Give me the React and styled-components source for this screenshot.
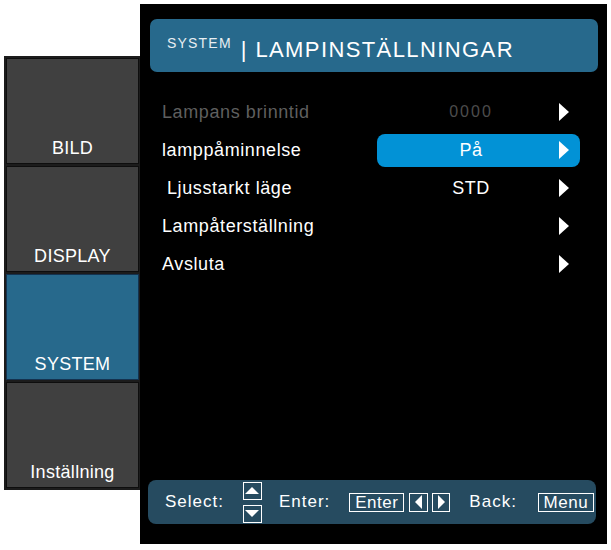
import styled, { createGlobalStyle } from "styled-components";

const GlobalStyle = createGlobalStyle`
  body {
    margin: 0;
    background: #fff;
    font-family: "Liberation Sans", Arial, sans-serif;
  }
`;

const tabs = ["BILD", "DISPLAY", "SYSTEM", "Inställning"];

const rows = [
  { label: "Lampans brinntid", value: "0000", dim: true },
  { label: "lamppåminnelse", value: "På", active: true },
  { label: "Ljusstarkt läge", value: "STD", indent: true },
  { label: "Lampåterställning", value: "" },
  { label: "Avsluta", value: "" },
];

const App = () => {
  return (
    <Screen>
      <GlobalStyle />
      <Sidebar>
        {tabs.map((tab) => (
          <Tab key={tab} selected={tab === "SYSTEM"}>
            {tab}
          </Tab>
        ))}
      </Sidebar>
      <Panel>
        <Header>
          <Crumb>SYSTEM</Crumb>
          <Title>| LAMPINSTÄLLNINGAR</Title>
        </Header>
        <List>
          {rows.map((row) => (
            <Row key={row.label}>
              <Label dim={row.dim} indent={row.indent}>
                {row.label}
              </Label>
              <ValueCell active={row.active}>
                <Value dim={row.dim}>{row.value}</Value>
                <Arrow />
              </ValueCell>
            </Row>
          ))}
        </List>
        <Footer>
          <Hint>Select:</Hint>
          <UpDown>
            <KeyBox wide="19px" tall="18px">
              <Tri dir="up" />
            </KeyBox>
            <KeyBox wide="19px" tall="18px">
              <Tri dir="down" />
            </KeyBox>
          </UpDown>
          <Hint gap="17px">Enter:</Hint>
          <KeyBox gap="19px" wide="55px">Enter</KeyBox>
          <KeyBox gap="5px" wide="19px">
            <Tri dir="left" />
          </KeyBox>
          <KeyBox gap="4px" wide="18px">
            <Tri dir="right" />
          </KeyBox>
          <Hint gap="19px">Back:</Hint>
          <KeyBox gap="21px" wide="56px">Menu</KeyBox>
        </Footer>
      </Panel>
    </Screen>
  );
};

export default App;

const Screen = styled.div`
  display: flex;
  align-items: flex-start;
  padding: 4px 0 0 4px;
`;

const Sidebar = styled.nav`
  margin-top: 52px;
  width: 136px;
  box-sizing: border-box;
  padding: 2px 1px 2px 2px;
  background: #1c1c1c;
  display: flex;
  flex-direction: column;
  gap: 2px;
`;

const Tab = styled.div`
  height: 106px;
  box-sizing: border-box;
  border: 1px solid ${(p) => (p.selected ? "#14324f" : "#0e0e0e")};
  background: ${(p) => (p.selected ? "#27698c" : "#404040")};
  color: #fff;
  font-size: 18px;
  line-height: 20px;
  letter-spacing: 0.3px;
  display: flex;
  align-items: flex-end;
  justify-content: center;
  padding-bottom: 5px;
`;

const Panel = styled.main`
  width: 467px;
  height: 540px;
  box-sizing: border-box;
  background: #000;
  padding: 15px 0 20px 0;
  display: flex;
  flex-direction: column;
`;

const Header = styled.header`
  height: 53px;
  box-sizing: border-box;
  margin: 0 9px 0 10px;
  background: #27698c;
  border-radius: 7px;
  display: flex;
  align-items: flex-start;
  padding: 17px 0 0 17px;
  color: #fff;
`;

const Crumb = styled.span`
  font-size: 14px;
  line-height: 14px;
  letter-spacing: 1.2px;
  color: #e8eef2;
`;

const Title = styled.span`
  margin: 3px 0 0 9px;
  font-size: 22px;
  line-height: 22px;
  letter-spacing: 1.4px;
`;

const List = styled.div`
  margin-top: 21px;
  padding-left: 22px;
  display: flex;
  flex-direction: column;
`;

const Row = styled.div`
  height: 38px;
  display: flex;
  align-items: center;
`;

const Label = styled.div`
  width: 215px;
  box-sizing: border-box;
  padding-left: ${(p) => (p.indent ? "5px" : "0")};
  font-size: 18px;
  letter-spacing: 0.6px;
  color: ${(p) => (p.dim ? "#5f5f5f" : "#fff")};
`;

const ValueCell = styled.div`
  width: 203px;
  height: 33px;
  box-sizing: border-box;
  padding-right: 11px;
  border-radius: 8px;
  background: ${(p) => (p.active ? "#0292d6" : "transparent")};
  display: flex;
  align-items: center;
`;

const Value = styled.div`
  flex: 1;
  padding-left: 6px;
  text-align: center;
  color: ${(p) => (p.dim ? "#4c4c4c" : "#fff")};
  font-size: ${(p) => (p.dim ? "16px" : "18px")};
  letter-spacing: ${(p) => (p.dim ? "2px" : "0.5px")};
`;

const Arrow = styled.span`
  width: 0;
  height: 0;
  border-left: 10px solid #fff;
  border-top: 9px solid transparent;
  border-bottom: 9px solid transparent;
`;

const Footer = styled.footer`
  margin: auto 11px 0 8px;
  height: 44px;
  box-sizing: border-box;
  background: #264b60;
  border-radius: 8px;
  padding-left: 17px;
  display: flex;
  align-items: center;
  color: #fff;
`;

const Hint = styled.span`
  margin-left: ${(p) => p.gap || "0"};
  font-size: 17px;
  letter-spacing: 1px;
`;

const UpDown = styled.div`
  margin-left: 19px;
  display: flex;
  flex-direction: column;
  gap: 5px;
`;

const KeyBox = styled.div`
  margin-left: ${(p) => p.gap || "0"};
  width: ${(p) => p.wide};
  height: ${(p) => p.tall || "19px"};
  box-sizing: border-box;
  border: 1px solid #fff;
  display: flex;
  align-items: center;
  justify-content: center;
  font-size: 17px;
  letter-spacing: 0.5px;
  line-height: 1;
`;

const Tri = styled.span`
  width: 0;
  height: 0;
  ${(p) =>
    p.dir === "up"
      ? "border-bottom: 7px solid #fff; border-left: 7px solid transparent; border-right: 7px solid transparent;"
      : p.dir === "down"
      ? "border-top: 7px solid #fff; border-left: 7px solid transparent; border-right: 7px solid transparent;"
      : p.dir === "left"
      ? "border-right: 7px solid #fff; border-top: 7px solid transparent; border-bottom: 7px solid transparent;"
      : "border-left: 7px solid #fff; border-top: 7px solid transparent; border-bottom: 7px solid transparent;"}
`;
